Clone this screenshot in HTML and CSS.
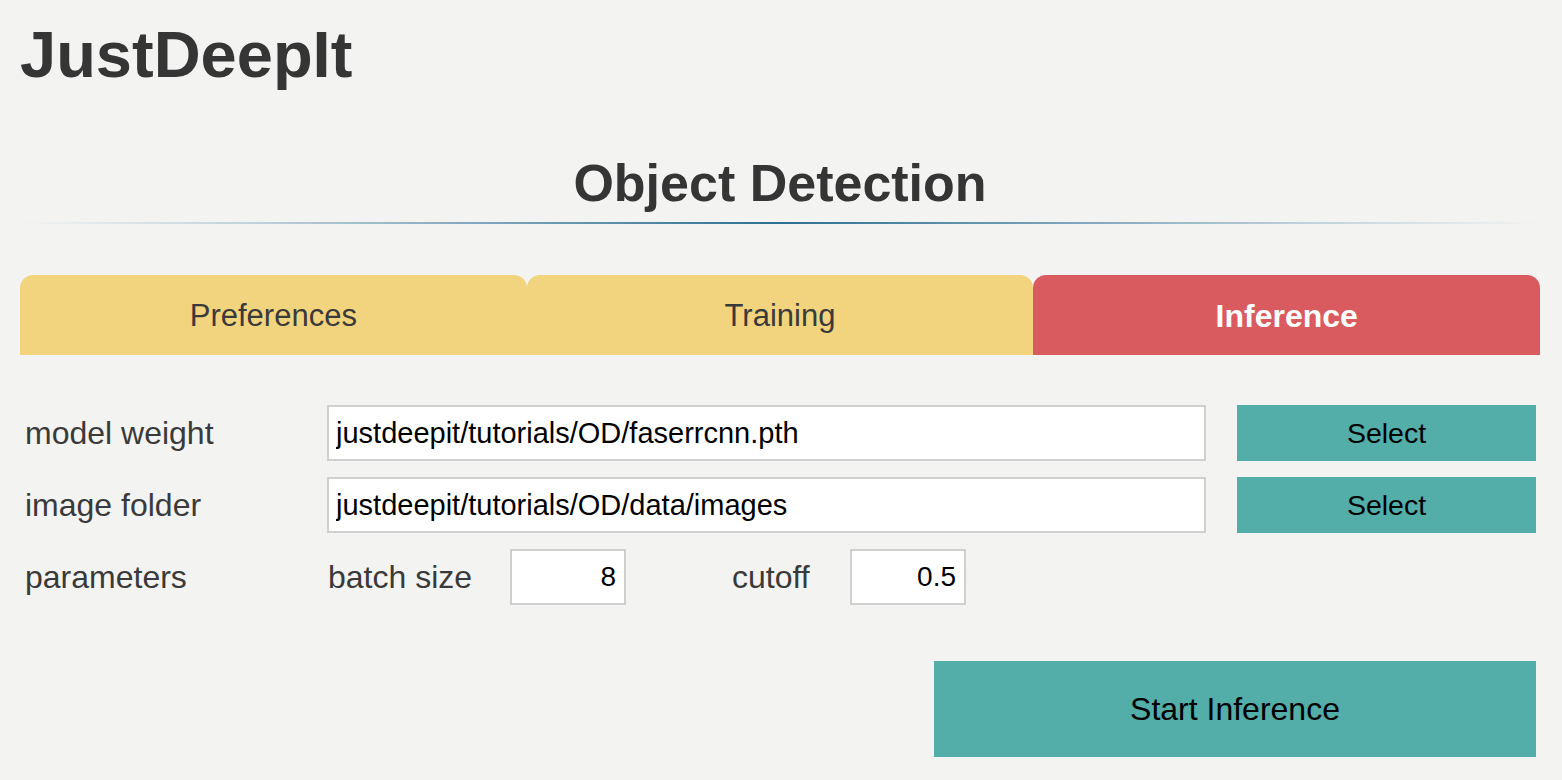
FILE: index.html
```html
<!DOCTYPE html>
<html lang="en">
<head>
<meta charset="utf-8">
<title>JustDeepIt</title>
<link rel="stylesheet" href="styles.css">
</head>
<body>
<div class="page">
  <h1 class="app-title">JustDeepIt</h1>
  <h2 class="module-title">Object Detection</h2>
  <div class="divider"></div>
  <nav class="tabs">
    <div class="tab">Preferences</div>
    <div class="tab">Training</div>
    <div class="tab active">Inference</div>
  </nav>
  <form class="form">
    <div class="row">
      <label class="label">model weight</label>
      <input class="path" type="text" value="justdeepit/tutorials/OD/faserrcnn.pth">
      <button type="button" class="btn select">Select</button>
    </div>
    <div class="row">
      <label class="label">image folder</label>
      <input class="path" type="text" value="justdeepit/tutorials/OD/data/images">
      <button type="button" class="btn select">Select</button>
    </div>
    <div class="row">
      <label class="label">parameters</label>
      <div class="params">
        <span class="plabel">batch size</span>
        <input class="num" type="text" value="8">
        <span class="plabel cutoff">cutoff</span>
        <input class="num" type="text" value="0.5">
      </div>
    </div>
    <div class="actions">
      <button type="button" class="btn start">Start Inference</button>
    </div>
  </form>
</div>
</body>
</html>
```

FILE: styles.css
```css
* { box-sizing: border-box; }
html, body {
  margin: 0;
  padding: 0;
  background: #f3f3f2;
}
body {
  font-family: "Liberation Sans", Arial, sans-serif;
  color: #3a3a3a;
}
.page {
  padding: 22px 22px 0 20px;
  width: 1562px;
}
.app-title {
  margin: 0;
  font-size: 65px;
  line-height: 65px;
  font-weight: bold;
  color: #353535;
}
.module-title {
  margin: 70px 0 0 0;
  font-size: 52px;
  line-height: 52px;
  font-weight: bold;
  text-align: center;
  color: #353535;
}
.divider {
  margin-top: 13px;
  height: 2px;
  background: linear-gradient(to right, rgba(44,111,147,0) 0%, rgba(44,111,147,0.25) 15%, #2c6f93 50%, rgba(44,111,147,0.25) 85%, rgba(44,111,147,0) 100%);
}
.tabs {
  margin-top: 51px;
  display: flex;
  height: 80px;
  width: 1520px;
}
.tab {
  flex: 1 1 0;
  background: #f2d47e;
  border-radius: 13px 13px 0 0;
  text-align: center;
  font-size: 31px;
  line-height: 82px;
  color: #3a3a3a;
}
.tab.active {
  background: #d95b5f;
  color: #ffffff;
  font-weight: bold;
  font-size: 32px;
}
.form {
  margin-top: 50px;
  display: flex;
  flex-direction: column;
  gap: 16px;
  padding-left: 5px;
}
.row {
  display: flex;
  align-items: center;
  height: 56px;
}
.label {
  width: 302px;
  font-size: 32px;
  color: #3a3a3a;
}
.path {
  width: 879px;
  height: 56px;
  border: 2px solid #cfcfcf;
  background: #fff;
  padding: 0 7px;
  font-family: "Liberation Sans", Arial, sans-serif;
  font-size: 29px;
  color: #000;
  outline: none;
}
.btn {
  border: none;
  background: #53ada9;
  font-family: "Liberation Sans", Arial, sans-serif;
  color: #000;
  cursor: pointer;
}
.select {
  margin-left: 31px;
  width: 299px;
  height: 56px;
  font-size: 28.5px;
}
.params {
  display: flex;
  align-items: center;
}
.plabel {
  width: 183px;
  padding-left: 1px;
  font-size: 32px;
  color: #3a3a3a;
}
.plabel.cutoff {
  margin-left: 105px;
  width: 119px;
}
.num {
  width: 116px;
  height: 56px;
  border: 2px solid #cfcfcf;
  background: #fff;
  padding: 0 8px;
  text-align: right;
  font-family: "Liberation Sans", Arial, sans-serif;
  font-size: 28px;
  color: #000;
  outline: none;
}
.actions {
  margin-top: 40px;
  display: flex;
  justify-content: flex-end;
  width: 1511px;
}
.start {
  width: 602px;
  height: 96px;
  font-size: 32px;
}
```
